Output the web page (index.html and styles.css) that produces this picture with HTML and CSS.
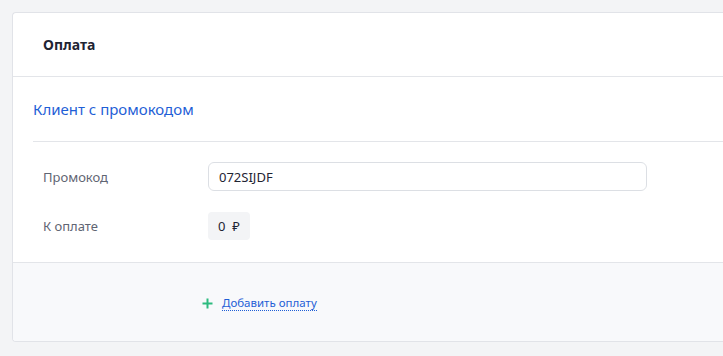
FILE: index.html
```html
<!DOCTYPE html>
<html lang="ru">
<head>
<meta charset="utf-8">
<link rel="stylesheet" href="styles.css">
</head>
<body>
<div class="card">
  <div class="card-header">Оплата</div>
  <div class="section">
    <div class="section-title">Клиент с промокодом</div>
  </div>
  <div class="fields">
    <div class="row">
      <div class="label">Промокод</div>
      <div class="input">072SIJDF</div>
    </div>
    <div class="row">
      <div class="label">К оплате</div>
      <div class="badge">0&nbsp;&nbsp;₽</div>
    </div>
  </div>
  <div class="card-footer">
    <a class="add-link" href="#">
      <svg class="plus" width="11" height="11" viewBox="0 0 11 11"><path d="M5.5 0.5v10M0.5 5.5h10" stroke="#2dbb7f" stroke-width="2" fill="none"/></svg>
      <span class="add-text">Добавить оплату</span>
    </a>
  </div>
</div>
</body>
</html>
```

FILE: styles.css
```css
html, body {
  margin: 0;
  padding: 0;
}
body {
  background: #f3f4f6;
  font-family: "Noto Sans", "Open Sans", sans-serif;
  overflow: hidden;
  height: 356px;
  padding: 12px 0 0 12px;
  box-sizing: border-box;
}
.card {
  background: #fff;
  border: 1px solid #e1e3e8;
  border-right: none;
  border-radius: 4px 0 0 4px;
  overflow: hidden;
}
.card-header {
  height: 63px;
  display: flex;
  align-items: center;
  padding-left: 30px;
  font-size: 14px;
  font-weight: 700;
  color: #1f2433;
  border-bottom: 1px solid #e3e5e9;
}
.section {
  margin-left: 20px;
  height: 64px;
  display: flex;
  align-items: center;
  border-bottom: 1px solid #e3e5e9;
}
.section-title {
  font-size: 15px;
  color: #1f5fd6;
}
.fields {
  padding: 20px 0 22px 30px;
  display: flex;
  flex-direction: column;
  gap: 21px;
}
.row {
  display: flex;
  align-items: center;
}
.label {
  width: 165px;
  font-size: 13px;
  color: #5f6573;
}
.input {
  width: 439px;
  height: 29px;
  box-sizing: border-box;
  border: 1px solid #dcdfe4;
  border-radius: 6px;
  padding-left: 10px;
  display: flex;
  align-items: center;
  font-size: 13px;
  color: #1f2433;
}
.badge {
  height: 28px;
  padding: 0 10px;
  background: #f3f4f6;
  border-radius: 4px;
  display: flex;
  align-items: center;
  font-size: 13px;
  color: #1f2433;
}
.card-footer {
  background: #f8f9fb;
  border-top: 1px solid #e3e5e9;
  height: 78px;
  display: flex;
  align-items: center;
  padding-left: 189px;
}
.add-link {
  display: flex;
  align-items: center;
  gap: 9px;
  text-decoration: none;
  margin-top: 2px;
}
.add-text {
  font-size: 11.5px;
  color: #1f5fd6;
  border-bottom: 1px dotted #1f5fd6;
  line-height: 15px;
}
```
